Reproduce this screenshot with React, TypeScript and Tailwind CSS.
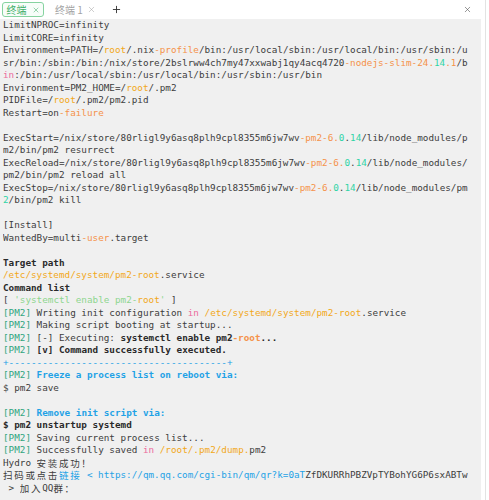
import { Plus, X } from "lucide-react";

type Seg = [string, string?];

const O = "text-[#f5924a]";
const G = "text-[#f2a81a]";
const N = "text-[#2fd4a6]";
const P = "text-[#ec6a9c]";
const T = "text-[#2fa57e]";
const S = "text-[#8ed68f]";
const Bl = "text-[#1fa2e6]";
const B = "font-bold text-[#2a2a2a]";
const OB = "font-bold text-[#f5924a]";
const BlB = "font-bold text-[#1fa2e6]";

const store = "/nix/store/80rligl9y6asq8plh9cpl8355m6jw7wv";

const lines: Seg[][] = [
  [["LimitNPROC=infinity"]],
  [["LimitCORE=infinity"]],
  [["Environment=PATH=/"], ["root", G], ["/.nix"], ["-profile", O], ["/bin:/usr/local/sbin:/usr/local/bin:/usr/sbin:/u"]],
  [["sr/bin:/sbin:/bin:/nix/store/2bslrww4ch7my47xxwabj1qy4acq4720"], ["-nodejs-slim-24.", O], ["14", N], [".1", O], ["/b"]],
  [["in", P], [":/bin:/usr/local/sbin:/usr/local/bin:/usr/sbin:/usr/bin"]],
  [["Environment=PM2_HOME=/"], ["root", G], ["/.pm2"]],
  [["PIDFile=/"], ["root", G], ["/.pm2/pm2.pid"]],
  [["Restart=on"], ["-failure", O]],
  [],
  [["ExecStart=" + store], ["-pm2-6.", O], ["0", N], ["."], ["14", N], ["/lib/node_modules/p"]],
  [["m2/bin/pm2 resurrect"]],
  [["ExecReload=" + store], ["-pm2-6.", O], ["0", N], ["."], ["14", N], ["/lib/node_modules/"]],
  [["pm2/bin/pm2 reload all"]],
  [["ExecStop=" + store], ["-pm2-6.", O], ["0", N], ["."], ["14", N], ["/lib/node_modules/pm"]],
  [["2", N], ["/bin/pm2 kill"]],
  [],
  [["[Install]"]],
  [["WantedBy=multi"], ["-user", O], [".target"]],
  [],
  [["Target path", B]],
  [["/etc/systemd/system/pm2-root", G], [".service"]],
  [["Command list", B]],
  [["[ "], ["'systemctl enable pm2-", S], ["root", G], ["'", S], [" ]"]],
  [["[PM2]", T], [" Writing init configuration "], ["in", P], [" "], ["/etc/systemd/system/pm2-root", G], [".service"]],
  [["[PM2]", T], [" Making script booting at startup..."]],
  [["[PM2]", T], [" [-] Executing: "], ["systemctl enable pm2", B], ["-root", OB], ["...", B]],
  [["[PM2]", T], [" "], ["[v] Command successfully executed.", B]],
  [["+---------------------------------------+", Bl]],
  [["[PM2]", T], [" "], ["Freeze a process list on reboot via:", BlB]],
  [["$ pm2 save"]],
  [],
  [["[PM2]", T], [" "], ["Remove init script via:", BlB]],
  [["$ pm2 unstartup systemd", B]],
  [["[PM2]", T], [" Saving current process list..."]],
  [["[PM2]", T], [" Successfully saved "], ["in", P], [" "], ["/root/.pm2/dump.", G], ["pm2"]],
  [["Hydro 安装成功！"]],
  [["扫码或点击"], ["链接 < https://qm.qq.com/cgi-bin/qm/qr?k=0aT", Bl], ["ZfDKURRhPBZVpTYBohYG6P6sxABTw"]],
  [[" > 加入QQ群："]],
];

const isWide = (ch: string) => /[\u3000-\u9fff\uff00-\uffef]/.test(ch);

// wide chars take two terminal cells
const Cells = ({ text }: { text: string }) => {
  const parts: (string | { wide: string })[] = [];
  let buf = "";
  for (const ch of text) {
    if (isWide(ch)) {
      if (buf) parts.push(buf);
      buf = "";
      parts.push({ wide: ch });
    } else {
      buf += ch;
    }
  }
  if (buf) parts.push(buf);
  return (
    <>
      {parts.map((p, i) =>
        typeof p === "string" ? (
          <span key={i}>{p}</span>
        ) : (
          <span
            key={i}
            className="inline-block align-top w-[11.2px] h-[12.5px] overflow-hidden font-['Noto_Sans_CJK_SC',sans-serif] text-[9.5px] leading-[12.5px]"
          >
            {p.wide}
          </span>
        )
      )}
    </>
  );
};

const TerminalLine = ({ segs }: { segs: Seg[] }) => (
  <div className="h-[12.5px] whitespace-pre overflow-hidden">
    {segs.map(([text, cls], i) => (
      <span key={i} className={cls}>
        <Cells text={text} />
      </span>
    ))}
  </div>
);

const App = () => {
  return (
    <div className="w-[489px] h-[500px] flex bg-white overflow-hidden">
      <div className="w-[481px] flex flex-col">
        <div className="h-[19px] flex items-center pl-[2px] pr-[9px] bg-white text-[10px] font-['Noto_Sans_CJK_SC',sans-serif]">
          <div className="h-[15px] w-[42px] flex items-center justify-center gap-[5px] border border-[#86d3a0] rounded-[3px] bg-[#f7fdf9] text-[#3fae68]">
            <span>终端</span>
            <X size={8} strokeWidth={1.6} />
          </div>
          <div className="ml-[11px] flex items-center gap-[4px] text-[#a3a3a3]">
            <span>终端 1</span>
            <X size={9} strokeWidth={1.4} />
          </div>
          <Plus size={11} strokeWidth={2} className="ml-[15px] text-[#333]" />
          <X size={9} strokeWidth={1.6} className="ml-auto text-[#555]" />
        </div>
        <div className="flex-1 bg-[#f0f0f0] px-[3px] font-['DejaVu_Sans_Mono',monospace] text-[9.3px] leading-[12.5px] text-[#3d3d3d]">
          {lines.map((segs, i) => (
            <TerminalLine key={i} segs={segs} />
          ))}
        </div>
      </div>
      <div className="flex-1 flex justify-center">
        <div className="w-px bg-[#e3e3e3]" />
      </div>
    </div>
  );
};

export default App;
